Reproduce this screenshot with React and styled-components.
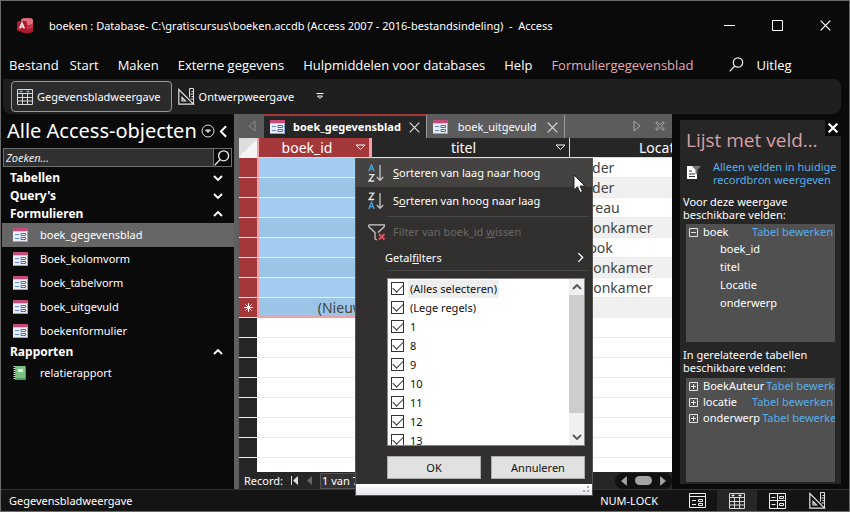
import styled, { createGlobalStyle } from 'styled-components';

const navItems = ['boek_gegevensblad', 'Boek_kolomvorm', 'boek_tabelvorm', 'boek_uitgevuld', 'boekenformulier'];

const locations = ['Zolder', 'Zolder', 'Bureau', 'Woonkamer', 'Ebook', 'Woonkamer', 'Woonkamer'];

const filterValues = ['(Alles selecteren)', '(Lege regels)', '1', '8', '9', '10', '11', '12', '13'];

const availableFields = ['boek_id', 'titel', 'Locatie', 'onderwerp'];

const relatedTables = ['BoekAuteur', 'locatie', 'onderwerp'];

function AccessLogo() {
  return (
    <svg width="17" height="17" viewBox="0 0 17 17">
      <path d="M4 3q0-2 6-2t6 2v11q0 2-6 2t-6-2z" fill="#a91d2e" />
      <path d="M4 3q0-2 6-2t6 2v3q-1 2-6 2t-6-2z" fill="#e0707c" />
      <path d="M4 7q2 2 6 2t6-2v3q-2 2-6 2t-6-2z" fill="#cb3a4a" />
      <rect x="0" y="4" width="10" height="10" rx="1.5" fill="#b3182b" />
      <path d="M2.6 11.6L5 6l2.4 5.6M3.5 9.9h3" fill="none" stroke="#fff" strokeWidth="1.3" />
    </svg>
  );
}

function SheetIcon({ size = 16, accent = '#5fb2ee' }) {
  return (
    <svg width={size} height={size} viewBox="0 0 16 16" fill="none" stroke="#d8d8d8">
      <path d="M.5.5h15v15H.5zM1 4.500h14M1 8.500h14M1 12h14M5.500 5v10M10.500 5v10" />
      <path d="M2.500 2h3L4 3.500zM9.500 2h3L11 3.500z" fill={accent} stroke={accent} strokeWidth=".6" />
    </svg>
  );
}

function DesignIcon({ size = 17 }) {
  return (
    <svg width={size} height={size} viewBox="0 0 17 17" fill="none" stroke="#e0e0e0">
      <path d="M.8 1.500v14.700h14.700zM4 9.500v3.500h3.500z" strokeWidth="1.2" />
      <path d="M11.500 9.500v-9h4v15.500M13.500 3.500H15M12.500 6H15M13.500 8.500H15M12.500 11H15" />
    </svg>
  );
}

function FormViewIcon() {
  return (
    <svg width="17" height="15" viewBox="0 0 17 15" fill="none" stroke="#eee">
      <path d="M.5.5h16v14H.5zM1 3.500h15M3 7.500h4M3 11.500h4M9.500 6.500h4v2h-4zM9.500 10.500h4v2h-4z" />
    </svg>
  );
}

function LayoutViewIcon() {
  return (
    <svg width="17" height="16" viewBox="0 0 17 16" fill="none" stroke="#eee">
      <path d="M.5.5h16v15H.5zM8.500 1v14M1 7.500h15M2.500 4.500h4M2.500 11.500h4M10.500 3.500h4v2h-4zM10.500 10.500h4v2h-4z" />
    </svg>
  );
}

function SearchIcon({ size = 15, color = '#f0f0f0' }) {
  return (
    <svg width={size} height={size} viewBox="0 0 15 15" fill="none" stroke={color} strokeWidth="1.2">
      <circle cx="9" cy="5.5" r="4.7" />
      <path d="M5.700 9L.7 14.300" />
    </svg>
  );
}

function FormIcon() {
  return (
    <svg width="15" height="14" viewBox="0 0 15 14">
      <rect width="15" height="14" fill="#e9effa" />
      <rect width="15" height="3" fill="#c64a78" />
      <rect y="3" width="15" height="1" fill="#f1b6cb" />
      <path d="M2 6.500h4M2 10.500h4" stroke="#6b8bc4" />
      <path d="M8 5.500h4.500v2H8zM8 9.500h4.500v2H8z" fill="#fff" stroke="#4a6bab" />
      <path d="M0 13.500h15M14.500 4v10" stroke="#8ba6d6" />
    </svg>
  );
}

function ReportIcon() {
  return (
    <svg width="13" height="14" viewBox="0 0 13 14">
      <rect x="2" y="0" width="11" height="14" rx="1" fill="#4f9a58" />
      <rect x="3" y="0" width="9" height="12" fill="#7cc183" />
      <rect x="5" y="3" width="5" height="3" fill="#d7f0d9" />
      <path d="M1.500 0v14" stroke="#e3efe3" strokeWidth="2" strokeDasharray="1 1" />
    </svg>
  );
}

function Chevron({ direction = 'down', size = 10, color = '#fff', weight = 1.8 }) {
  const turns = { down: 0, left: 90, up: 180, right: 270 };
  return (
    <svg width={size} height={size} viewBox="0 0 10 10" fill="none" stroke={color} strokeWidth={weight}>
      <path d="M1 3l4 4 4-4" transform={`rotate(${turns[direction]} 5 5)`} />
    </svg>
  );
}

function Cross({ size = 11, color = '#ddd', weight = 1.2 }) {
  return (
    <svg width={size} height={size} viewBox="0 0 11 11" stroke={color} strokeWidth={weight}>
      <path d="M.7.7l9.600 9.600M10.300.7L.7 10.300" />
    </svg>
  );
}

function SortIcon({ descending }) {
  return (
    <svg width="17" height="18" viewBox="0 0 17 18" fill="none" strokeWidth="1.3">
      <g transform={descending ? 'translate(0 9.5)' : undefined} stroke="#4aa3e0">
        <path d="M.8 7.500L3.500.8l2.700 6.700M1.800 5.200h3.400" />
      </g>
      <g transform={descending ? 'translate(0 -9.5)' : undefined} stroke="#e4e4e4">
        <path d="M1 10.700h4.800L1 17h5.200" />
      </g>
      <path d="M12 1v15M8.800 13l3.200 3.400 3.200-3.400" stroke="#c4c4c4" />
    </svg>
  );
}

function ClearFilterIcon() {
  return (
    <svg width="18" height="17" viewBox="0 0 18 17" fill="none" strokeWidth="1.2">
      <path d="M.8.8h15.500v2L10 8.500M.8.800v2L7 8.500V15l2 1" stroke="#d0d0d0" />
      <path d="M11 10l5.500 5.500M16.500 10L11 15.500" stroke="#e0525c" strokeWidth="1.8" />
    </svg>
  );
}

function FieldFilterIcon() {
  return (
    <svg width="15" height="15" viewBox="0 0 15 15">
      <path d="M1 1h7l3 4v9H1z" fill="#fff" />
      <path d="M3 6h3M3 9h6M3 11.500h6" stroke="#333" />
      <path d="M6 1h9l-3.500 4v4h-2V5z" fill="#777" />
    </svg>
  );
}

function TreeBox({ open }) {
  return (
    <svg width="9" height="9" viewBox="0 0 9 9" fill="none" stroke="#e4e4e4">
      <path d="M.5.5h8v8h-8zM2 4.500h5" />
      {!open && <path d="M4.500 2v5" />}
    </svg>
  );
}

function SortMarker() {
  return (
    <svg width="11" height="7" viewBox="0 0 11 7" fill="none" stroke="#fff">
      <path d="M1 1h9L5.500 5.500z" />
    </svg>
  );
}

function Triangle({ direction = 'right', color = '#8a8a8a', filled, height = 12 }) {
  return (
    <svg width="8" height={height} viewBox="0 0 8 12" fill={filled ? color : 'none'} stroke={color}>
      <path d={direction === 'right' ? 'M1 1v10l6-5z' : 'M7 1v10L1 6z'} />
    </svg>
  );
}

function FilterMenu() {
  return (
    <Menu>
      <MenuCommand type="button" $active>
        <MenuIcon><SortIcon /></MenuIcon>
        <span><u>S</u>orteren van laag naar hoog</span>
      </MenuCommand>
      <MenuCommand type="button">
        <MenuIcon><SortIcon descending /></MenuIcon>
        <span>S<u>o</u>rteren van hoog naar laag</span>
      </MenuCommand>
      <MenuRule />
      <MenuCommand type="button" disabled>
        <MenuIcon><ClearFilterIcon /></MenuIcon>
        <span>Filter van boek_id <u>w</u>issen</span>
      </MenuCommand>
      <SubmenuCommand type="button">
        <span>Getal<u>f</u>ilters</span>
        <Chevron direction="right" size={11} weight={1.2} />
      </SubmenuCommand>
      <MenuRule />
      <ValueList>
        <Values>
          {filterValues.map((value, index) => (
            <ValueRow key={value}>
              <CheckBox defaultChecked />
              <ValueText $focused={index === 0}>{value}</ValueText>
            </ValueRow>
          ))}
        </Values>
        <ScrollBar>
          <ScrollArrow><Chevron direction="up" color="#555" /></ScrollArrow>
          <ScrollThumb />
          <ScrollArrow><Chevron color="#555" /></ScrollArrow>
        </ScrollBar>
      </ValueList>
      <MenuButtons>
        <DialogButton type="button">OK</DialogButton>
        <DialogButton type="button">Annuleren</DialogButton>
      </MenuButtons>
      <ResizeStrip>
        <svg width="7" height="7" viewBox="0 0 7 7" fill="#aaa">
          <path d="M4 0h2v2H4zM0 4h2v2H0zM4 4h2v2H4z" />
        </svg>
      </ResizeStrip>
      <Pointer width="13" height="20" viewBox="0 0 13 20">
        <path d="M1 1v15l3.500-3.300L7 18.500l2.500-1-2.500-5.500h5z" fill="#fff" stroke="#222" />
      </Pointer>
    </Menu>
  );
}

export default function App() {
  return (
    <>
      <GlobalStyle />
      <Window>
        <TitleBar>
          <AccessLogo />
          <WindowTitle>boeken : Database- C:\gratiscursus\boeken.accdb (Access 2007 - 2016-bestandsindeling) &nbsp;-&nbsp; Access</WindowTitle>
          <WindowButton type="button" aria-label="Minimaliseren">
            <svg width="11" height="11" viewBox="0 0 11 11" stroke="#fff"><path d="M0 5.500h11" /></svg>
          </WindowButton>
          <WindowButton type="button" aria-label="Maximaliseren">
            <svg width="11" height="11" viewBox="0 0 11 11" fill="none" stroke="#fff"><path d="M.5.5h10v10H.5z" /></svg>
          </WindowButton>
          <WindowButton type="button" aria-label="Sluiten"><Cross color="#fff" /></WindowButton>
        </TitleBar>

        <MenuBar>
          <MenuTab type="button" $first>Bestand</MenuTab>
          <MenuTab type="button">Start</MenuTab>
          <MenuTab type="button">Maken</MenuTab>
          <MenuTab type="button">Externe gegevens</MenuTab>
          <MenuTab type="button">Hulpmiddelen voor databases</MenuTab>
          <MenuTab type="button">Help</MenuTab>
          <MenuTab type="button" $contextual>Formuliergegevensblad</MenuTab>
          <TellMe type="button"><SearchIcon />Uitleg</TellMe>
        </MenuBar>

        <Ribbon>
          <RibbonButton type="button" $pressed><SheetIcon />Gegevensbladweergave</RibbonButton>
          <RibbonButton type="button"><DesignIcon />Ontwerpweergave</RibbonButton>
          <RibbonMore type="button" aria-label="Meer">
            <svg width="8" height="7" viewBox="0 0 8 7" fill="none" stroke="#fff"><path d="M.5.5h7M1.500 3h5L4 5.500z" /></svg>
          </RibbonMore>
        </Ribbon>

        <Body>
          <NavPane>
            <NavHeader>
              <NavTitle>Alle Access-objecten</NavTitle>
              <svg width="14" height="14" viewBox="0 0 14 14" fill="none" stroke="#ddd">
                <circle cx="7" cy="7" r="6" />
                <path d="M4.500 6h5L7 8.500z" fill="#ddd" />
              </svg>
              <Chevron direction="left" size={13} weight={1.5} />
            </NavHeader>
            <SearchBox>
              <SearchInput type="text" placeholder="Zoeken..." aria-label="Zoeken" />
              <SearchButton type="button" aria-label="Zoeken"><SearchIcon size={16} /></SearchButton>
            </SearchBox>
            <GroupHeader type="button">Tabellen<Chevron /></GroupHeader>
            <GroupHeader type="button">Query's<Chevron /></GroupHeader>
            <GroupHeader type="button">Formulieren<Chevron direction="up" /></GroupHeader>
            {navItems.map((item, index) => (
              <NavItem key={item} href="#" $selected={index === 0}>
                <NavIcon><FormIcon /></NavIcon>
                {item}
              </NavItem>
            ))}
            <GroupHeader type="button">Rapporten<Chevron direction="up" /></GroupHeader>
            <NavItem href="#">
              <NavIcon><ReportIcon /></NavIcon>
              relatierapport
            </NavItem>
          </NavPane>

          <Document>
            <TabStrip>
              <TabScroll><Triangle direction="left" /></TabScroll>
              <Tab $active>
                <FormIcon />
                <TabName type="button">boek_gegevensblad</TabName>
                <IconButton type="button" aria-label="Tabblad sluiten"><Cross /></IconButton>
              </Tab>
              <Tab>
                <FormIcon />
                <TabName type="button">boek_uitgevuld</TabName>
                <IconButton type="button" aria-label="Tabblad sluiten"><Cross /></IconButton>
              </Tab>
              <TabTools>
                <Triangle color="#aaa" />
                <svg width="10" height="10" viewBox="0 0 10 10" fill="none" stroke="#aaa">
                  <path d="M.7 2L2 .7l3 3 3-3L9.300 2l-3 3 3 3L8 9.300l-3-3-3 3L.7 8l3-3z" />
                </svg>
              </TabTools>
            </TabStrip>

            <SheetArea>
              <Sheet>
                <colgroup>
                  <SelectorCol />
                  <IdCol />
                  <TitleCol />
                  <LocationCol />
                </colgroup>
                <thead>
                  <tr>
                    <Corner />
                    <ColumnHeader $selected><HeaderText>boek_id<SortMarker /></HeaderText></ColumnHeader>
                    <ColumnHeader><HeaderText>titel<SortMarker /></HeaderText></ColumnHeader>
                    <ColumnHeader><HeaderText>Locatie<SortMarker /></HeaderText></ColumnHeader>
                  </tr>
                </thead>
                <tbody>
                  {locations.map((location, index) => (
                    <Row key={index} $odd={index % 2 === 1}>
                      <Selector $selected />
                      <IdCell />
                      <Cell />
                      <Cell>{location}</Cell>
                    </Row>
                  ))}
                  <Row $odd>
                    <Selector $selected>
                      <svg width="9" height="9" viewBox="0 0 9 9" stroke="#fff">
                        <path d="M4.500 0v9M0 4.500h9M1.500 1.500l6 6M7.500 1.500l-6 6" />
                      </svg>
                    </Selector>
                    <IdCell $last>(Nieuw)</IdCell>
                    <Cell />
                    <Cell />
                  </Row>
                  {[1, 2, 3, 4, 5, 6, 7, 8].map((row) => (
                    <Row key={row}>
                      <Selector />
                      <Cell />
                      <Cell />
                      <Cell />
                    </Row>
                  ))}
                </tbody>
              </Sheet>
            </SheetArea>

            <RecordBar>
              <RecordLabel htmlFor="record">Record:</RecordLabel>
              <svg width="8" height="9" viewBox="0 0 8 9" fill="#ddd"><path d="M0 0h1v9H0zM7 0v9L2 4.500z" /></svg>
              <svg width="5" height="9" viewBox="0 0 5 9" fill="#666"><path d="M5 0v9L0 4.500z" /></svg>
              <RecordInput id="record" type="text" defaultValue="1 van 7" />
              <HorizontalScroll>
                <Triangle direction="left" color="#a5a5a5" filled height={10} />
                <HorizontalThumb />
                <Triangle color="#a5a5a5" filled height={10} />
              </HorizontalScroll>
            </RecordBar>
            <FilterMenu />
          </Document>

          <FieldPane>
            <FieldHeader>
              <FieldTitle>Lijst met velden</FieldTitle>
              <FieldClose type="button" aria-label="Sluiten"><Cross size={10} color="#fff" weight={2.4} /></FieldClose>
            </FieldHeader>
            <SourceToggle>
              <FieldFilterIcon />
              <FieldLink href="#">Alleen velden in huidige recordbron weergeven</FieldLink>
            </SourceToggle>
            <FieldCaption>Voor deze weergave<br />beschikbare velden:</FieldCaption>
            <FieldTree $tall>
              <TreeRow>
                <TreeBox open />boek
                <EditLink href="#" $end>Tabel bewerken</EditLink>
              </TreeRow>
              {availableFields.map((field) => <FieldName key={field}>{field}</FieldName>)}
            </FieldTree>
            <FieldCaption $spaced>In gerelateerde tabellen<br />beschikbare velden:</FieldCaption>
            <FieldTree>
              {relatedTables.map((table) => (
                <TreeRow key={table}>
                  <TreeBox />{table}
                  <EditLink href="#" $end={table === 'locatie'}>Tabel bewerken</EditLink>
                </TreeRow>
              ))}
            </FieldTree>
          </FieldPane>
        </Body>

        <StatusBar>
          <StatusText>Gegevensbladweergave</StatusText>
          <NumLock>NUM-LOCK</NumLock>
          <ViewButton type="button" aria-label="Formulierweergave"><FormViewIcon /></ViewButton>
          <ViewButton type="button" aria-label="Gegevensbladweergave" $active><SheetIcon accent="#fff" /></ViewButton>
          <ViewButton type="button" aria-label="Indelingsweergave"><LayoutViewIcon /></ViewButton>
          <ViewButton type="button" aria-label="Ontwerpweergave"><DesignIcon /></ViewButton>
        </StatusBar>
      </Window>
    </>
  );
}

const GlobalStyle = createGlobalStyle`
  * {
    box-sizing: border-box;
  }

  body {
    margin: 0;
    background: #0a0a0a;
    color: #fff;
    font-family: 'Noto Sans', 'Open Sans', sans-serif;
    font-size: 11px;
    line-height: 16px;
  }

  button {
    border: 0;
    padding: 0;
    background: none;
    color: inherit;
    font: inherit;
    white-space: nowrap;
  }

  svg {
    display: block;
    flex: none;
  }
`;

const Window = styled.div`
  display: flex;
  flex-direction: column;
  min-height: 100vh;
  border: 1px solid #6a6a6a;
  overflow: hidden;
`;

const TitleBar = styled.header`
  display: flex;
  align-items: center;
  height: 49px;
  padding-left: 16px;
`;

const WindowTitle = styled.h1`
  flex: 1;
  margin: 0;
  padding-left: 15px;
  font-size: 11px;
  font-weight: 400;
  white-space: nowrap;
`;

const WindowButton = styled.button`
  display: flex;
  align-items: center;
  justify-content: center;
  width: 48px;
  height: 32px;
`;

const MenuBar = styled.nav`
  display: flex;
  align-items: center;
  gap: 19px;
  height: 29px;
  padding-left: 8px;
  font-family: 'Open Sans', sans-serif;
  font-size: 13px;
  line-height: 18px;
`;

const MenuTab = styled.button`
  margin-right: ${(props) => (props.$first ? '-8px' : 0)};
  color: ${(props) => (props.$contextual ? '#e3a9b2' : '#fff')};
`;

const TellMe = styled.button`
  display: flex;
  align-items: center;
  gap: 13px;
  margin-left: 16px;
`;

const Ribbon = styled.div`
  display: flex;
  align-items: center;
  gap: 6px;
  height: 35px;
  margin: 0 8px 0 2px;
  padding-left: 8px;
  border-radius: 0 8px 8px 8px;
  background: #1f1f1f;
`;

const RibbonButton = styled.button`
  display: flex;
  align-items: center;
  gap: 4px;
  height: 31px;
  padding: ${(props) => (props.$pressed ? '0 10px 0 5px' : 0)};
  border: ${(props) => (props.$pressed ? '1px solid #9a9a9a' : 0)};
  border-radius: 4px;
  background: ${(props) => (props.$pressed ? '#2b2b2b' : 'none')};
`;

const RibbonMore = styled.button`
  padding: 6px 16px;
`;

const Body = styled.main`
  display: flex;
  flex: 1;
  padding-right: 8px;
`;

const NavPane = styled.aside`
  flex: none;
  width: 233px;
  padding-left: 1px;
`;

const NavHeader = styled.div`
  display: flex;
  align-items: center;
  gap: 2px;
  height: 34px;
  padding: 0 4px 0 5px;
`;

const NavTitle = styled.h2`
  flex: 1;
  margin: 0;
  font-size: 20px;
  font-weight: 400;
  line-height: 28px;
  white-space: nowrap;
`;

const SearchBox = styled.div`
  display: flex;
  height: 19px;
  margin: 0 2px 2px 1px;
  border: 1px solid #6e6e6e;
`;

const SearchInput = styled.input`
  flex: 1;
  min-width: 0;
  padding: 0 2px;
  border: 0;
  background: #303030;
  color: #eee;
  font: italic 11px 'Noto Sans', sans-serif;

  &::placeholder {
    color: #eee;
  }
`;

const SearchButton = styled.button`
  width: 18px;
  border-left: 1px solid #6e6e6e;
`;

const GroupHeader = styled.button`
  display: flex;
  align-items: center;
  justify-content: space-between;
  width: 100%;
  height: 18px;
  padding: 0 11px 0 8px;
  font-size: 12px;
  font-weight: 700;
`;

const NavItem = styled.a`
  display: flex;
  align-items: center;
  height: 24px;
  padding-left: 11px;
  background: ${(props) => (props.$selected ? '#666' : 'none')};
  color: #fff;
  text-decoration: none;
`;

const NavIcon = styled.span`
  width: 27px;
`;

const Document = styled.section`
  position: relative;
  display: flex;
  flex-direction: column;
  flex: 1;
  min-width: 0;
  margin-right: 8px;
  border-left: 5px solid #5f5f5f;
`;

const TabStrip = styled.div`
  display: flex;
  height: 24px;
  background: #5c5c5c;
`;

const TabScroll = styled.div`
  display: flex;
  align-items: center;
  justify-content: center;
  width: 25px;
`;

const Tab = styled.div`
  display: flex;
  align-items: center;
  gap: ${(props) => (props.$active ? '8px' : '10px')};
  padding: 0 6px;
  border-top: 2px solid ${(props) => (props.$active ? '#a4373a' : '#5c5c5c')};
  border-right: 1px solid #999;
  background: ${(props) => (props.$active ? '#262626' : 'none')};
  font-weight: ${(props) => (props.$active ? 700 : 400)};
`;

const TabName = styled.button`
  line-height: 16px;
`;

const IconButton = styled.button`
  padding: 2px 0;
`;

const TabTools = styled.div`
  display: flex;
  align-items: center;
  gap: 14px;
  margin-left: auto;
  padding-right: 7px;
`;

const SheetArea = styled.div`
  flex: 1 1 0;
  min-height: 0;
  overflow: hidden;
  background: #fff;
`;

const Sheet = styled.table`
  width: 531px;
  table-layout: fixed;
  border-collapse: separate;
  border-spacing: 0;
  font-size: 14px;
  line-height: 18px;
`;

const SelectorCol = styled.col`
  width: 18px;
`;

const IdCol = styled.col`
  width: 115px;
`;

const TitleCol = styled.col`
  width: 198px;
`;

const LocationCol = styled.col`
  width: 200px;
`;

const Corner = styled.td`
  height: 20px;
  padding: 0;
  background: linear-gradient(135deg, #ddd 50%, #f4f4f4 50%);
`;

const ColumnHeader = styled.th`
  height: 20px;
  padding: 0;
  border-right: ${(props) => (props.$selected ? '3px solid #f2a0a8' : '1px solid #ddd')};
  border-left: ${(props) => (props.$selected ? '2px solid #f2a0a8' : 0)};
  border-bottom: 1px solid #ddd;
  background: ${(props) => (props.$selected ? '#a4373a' : '#262626')};
  font-weight: 400;
`;

const HeaderText = styled.div`
  display: grid;
  grid-template-columns: 1fr 14px;
  align-items: center;
`;

const Row = styled.tr`
  height: 20px;
  background: ${(props) => (props.$odd ? '#f0f0f0' : '#fff')};
`;

const Selector = styled.td`
  height: 20px;
  padding: 0 0 0 5px;
  border-bottom: 1px solid #eee;
  background: ${(props) => (props.$selected ? '#a4373a' : '#262626')};
`;

const Cell = styled.td`
  height: 20px;
  padding: 0 2px;
  border-bottom: 1px solid #ececec;
  color: #444;
`;

const IdCell = styled(Cell)`
  padding-right: 4px;
  border-left: 2px solid #f2a0a8;
  border-bottom: ${(props) => (props.$last ? '2px solid #f2a0a8' : '1px solid #eee')};
  background: #a2cdf1;
  line-height: 17px;
  text-align: right;

  tr:nth-child(even) & {
    background: #9bc5e6;
  }
`;

const RecordBar = styled.div`
  display: flex;
  align-items: center;
  gap: 8px;
  height: 17px;
  padding-left: 5px;
  background: #262626;
`;

const RecordLabel = styled.label`
  white-space: nowrap;
`;

const RecordInput = styled.input`
  width: 60px;
  height: 16px;
  padding: 0 1px;
  border: 1px solid #555;
  background: #333;
  color: #fff;
  font: inherit;
`;

const HorizontalScroll = styled.div`
  display: flex;
  align-items: center;
  gap: 7px;
  height: 16px;
  margin-left: auto;
  padding: 0 5px;
  border-radius: 8px;
  background: #111;
`;

const HorizontalThumb = styled.div`
  width: 17px;
  height: 9px;
  border-radius: 5px;
  background: #a5a5a5;
`;

const Menu = styled.div`
  position: absolute;
  top: 44px;
  left: 116px;
  z-index: 2;
  width: 238px;
  border: 1px solid #55534f;
  background: #32302f;
`;

const MenuCommand = styled.button`
  display: flex;
  align-items: center;
  width: 100%;
  height: 28px;
  background: ${(props) => (props.$active ? '#454341' : 'none')};
  color: ${(props) => (props.disabled ? '#6a6866' : '#fff')};
`;

const MenuIcon = styled.span`
  display: flex;
  width: 37px;
  padding-left: 12px;
`;

const MenuRule = styled.hr`
  height: 1px;
  margin: 1px 3px 1px 31px;
  border: 0;
  background: #4a4846;
`;

const SubmenuCommand = styled.button`
  display: flex;
  align-items: center;
  justify-content: space-between;
  width: 100%;
  height: 23px;
  padding: 0 6px 0 29px;
`;

const ValueList = styled.div`
  display: flex;
  height: 168px;
  margin: 7px 7px 10px 31px;
  border: 1px solid #888;
  background: #fff;
  color: #111;
`;

const Values = styled.div`
  flex: 1;
  overflow: hidden;
`;

const ValueRow = styled.label`
  display: flex;
  align-items: center;
  gap: 4px;
  height: 19px;
  padding-left: 3px;
`;

const CheckBox = styled.input.attrs({ type: 'checkbox' })`
  display: grid;
  place-items: center;
  appearance: none;
  width: 13px;
  height: 13px;
  margin: 0;
  border: 1px solid #333;
  background: #fff;

  &:checked::after {
    content: '';
    width: 9px;
    height: 5px;
    margin-bottom: 3px;
    border: solid #333;
    border-width: 0 0 1px 1px;
    transform: rotate(-45deg);
  }
`;

const ValueText = styled.span`
  padding: 1px 2px;
  background: ${(props) => (props.$focused ? '#eee' : 'none')};
`;

const ScrollBar = styled.div`
  display: flex;
  flex-direction: column;
  width: 15px;
  background: #f0f0f0;
`;

const ScrollArrow = styled.div`
  display: flex;
  align-items: center;
  justify-content: center;
  height: 16px;
`;

const ScrollThumb = styled.div`
  height: 118px;
  margin-bottom: auto;
  background: #cdcdcd;
`;

const MenuButtons = styled.div`
  display: grid;
  grid-template-columns: 1fr 1fr;
  gap: 10px;
  margin: 0 7px 5px 31px;
`;

const DialogButton = styled.button`
  height: 23px;
  border: 1px solid #adadad;
  background: #e1e1e1;
  color: #111;
`;

const ResizeStrip = styled.div`
  display: flex;
  align-items: flex-end;
  justify-content: flex-end;
  height: 11px;
  padding: 2px;
  background: linear-gradient(#fff, #e4e6ea);
`;

const Pointer = styled.svg`
  position: absolute;
  top: 15px;
  right: 6px;
`;

const FieldPane = styled.aside`
  flex: none;
  width: 161px;
  padding: 0 6px;
  margin: 6px 0 5px;
  background: #262626;
`;

const FieldHeader = styled.div`
  display: flex;
  align-items: flex-start;
  margin-right: -6px;
`;

const FieldTitle = styled.h2`
  flex: 1;
  min-width: 0;
  margin: 0;
  padding-top: 6px;
  overflow: hidden;
  color: #d9a0a4;
  font-family: 'Open Sans', sans-serif;
  font-size: 19px;
  font-weight: 400;
  line-height: 28px;
  text-overflow: ellipsis;
  white-space: nowrap;
`;

const FieldClose = styled.button`
  display: flex;
  align-items: center;
  justify-content: center;
  width: 16px;
  height: 16px;
  background: #0a0a0a;
`;

const SourceToggle = styled.div`
  display: flex;
  align-items: center;
  gap: 12px;
  height: 37px;
  margin-right: -6px;
`;

const FieldLink = styled.a`
  color: #56aeea;
  line-height: 13px;
  text-decoration: none;
`;

const FieldCaption = styled.p`
  margin: 0 -6px 0 -3px;
  padding: ${(props) => (props.$spaced ? '6px 0 4px' : '4px 0 3px')};
  line-height: 13px;
`;

const FieldTree = styled.div`
  height: ${(props) => (props.$tall ? '118px' : '104px')};
  overflow: hidden;
  background: #505050;
`;

const TreeRow = styled.div`
  display: flex;
  align-items: center;
  gap: 5px;
  height: 16px;
  padding: 0 2px 0 3px;
  white-space: nowrap;
`;

const EditLink = styled.a`
  margin-left: ${(props) => (props.$end ? 'auto' : '-3px')};
  color: #56aeea;
  text-decoration: none;
`;

const FieldName = styled.div`
  height: 18px;
  padding-left: 34px;
  line-height: 18px;
`;

const StatusBar = styled.footer`
  display: flex;
  align-items: center;
  height: 22px;
  padding: 0 12px 0 8px;
  border-top: 1px solid #333;
  background: #141414;
`;

const StatusText = styled.span`
  flex: 1;
`;

const NumLock = styled.span`
  padding-right: 19px;
`;

const ViewButton = styled.button`
  display: flex;
  align-items: center;
  justify-content: center;
  width: 40px;
  height: 21px;
  background: ${(props) => (props.$active ? '#262626' : 'none')};
`;
